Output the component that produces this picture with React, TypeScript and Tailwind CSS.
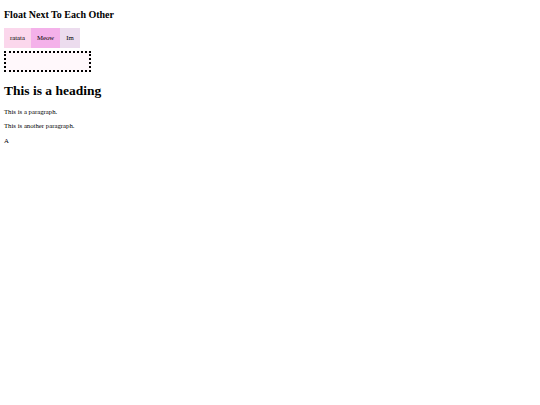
export default function App() {
  return (
    <div className="min-h-[405px] bg-white px-[4px] text-black font-['Liberation_Serif',serif]">
      <h3 className="pt-[8.5px] text-[10px] font-bold leading-[11.5px]">Float Next To Each Other</h3>

      <div className="mt-[8px] flex text-[6.75px] leading-[20px]">
        <div className="h-[20px] bg-[#fbd7ec] px-[6px]">ratata</div>
        <div className="h-[20px] bg-[#f4b1ea] px-[6px]">Meow</div>
        <div className="h-[20px] bg-[#ecdcee] px-[6px]">Im</div>
      </div>

      <div className="mt-[3px] h-[21px] w-[87px] border-2 border-dotted border-black bg-[#fff8fb]" />

      <h2 className="mt-[11px] text-[13.5px] font-bold leading-[15.5px]">This is a heading</h2>

      <p className="mt-[9px] text-[6.75px] leading-[7.8px]">This is a paragraph.</p>
      <p className="mt-[7px] text-[6.75px] leading-[7.8px]">This is another paragraph.</p>
      <p className="mt-[7px] text-[6.75px] leading-[7.8px]">A</p>
    </div>
  )
}
